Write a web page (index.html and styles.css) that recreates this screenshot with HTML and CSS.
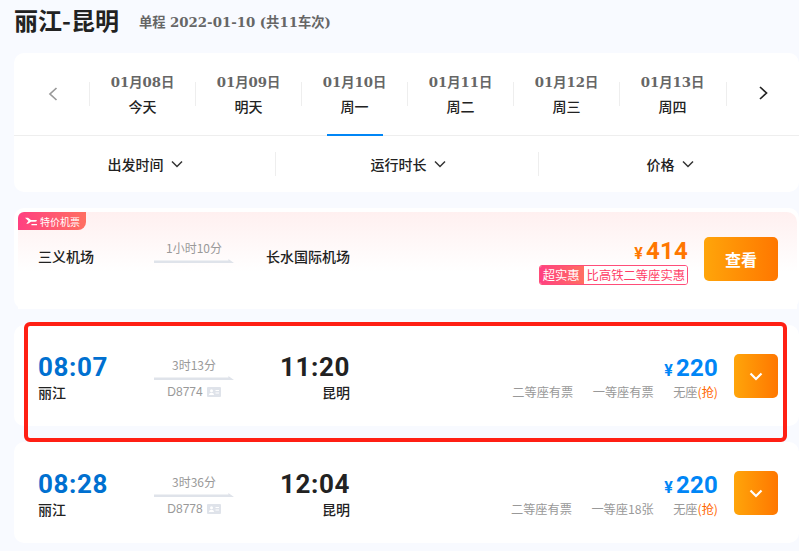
FILE: index.html
```html
<!DOCTYPE html>
<html lang="zh">
<head>
<meta charset="utf-8">
<title>丽江-昆明</title>
<link rel="stylesheet" href="styles.css">
</head>
<body>
<main class="page">
  <header class="head">
    <h1>丽江-昆明</h1>
    <p>单程 2022-01-10 (共11车次)</p>
  </header>

  <section class="panel">
    <nav class="dates">
      <div class="arrow prev"><svg width="10" height="16" viewBox="0 0 10 16"><path d="M8.500 2 2 8l6.500 6" /></svg></div>
      <div class="date"><b>01月08日</b><span>今天</span></div>
      <div class="date"><b>01月09日</b><span>明天</span></div>
      <div class="date active"><b>01月10日</b><span>周一</span></div>
      <div class="date"><b>01月11日</b><span>周二</span></div>
      <div class="date"><b>01月12日</b><span>周三</span></div>
      <div class="date"><b>01月13日</b><span>周四</span></div>
      <div class="arrow next"><svg width="10" height="16" viewBox="0 0 10 16"><path d="M2 2l6.500 6L2 14" /></svg></div>
    </nav>
    <div class="filters">
      <div class="filter">出发时间<svg width="12" height="8" viewBox="0 0 12 8"><path d="M1 1.500 6 6.500l5-5" /></svg></div>
      <div class="filter">运行时长<svg width="12" height="8" viewBox="0 0 12 8"><path d="M1 1.500 6 6.500l5-5" /></svg></div>
      <div class="filter">价格<svg width="12" height="8" viewBox="0 0 12 8"><path d="M1 1.500 6 6.500l5-5" /></svg></div>
    </div>
  </section>

  <section class="card promo">
    <div class="promo-inner">
      <div class="tag"><svg width="12" height="9" viewBox="0 0 14 10"><path d="M0 .5h3.500L7 3.200h5c1.300 0 2 .5 2 1s-.7 1-2 1H7L3.500 7.500H1.500L4 4.300zM7.500 8H14v1.500H7.500z" /></svg>特价机票</div>
      <div class="row promo-row">
        <div class="from name airport">三义机场</div>
        <div class="mid">
          <span class="dur">1小时10分</span>
          <i class="line"></i>
        </div>
        <div class="to name airport">长水国际机场</div>
        <div class="price-box">
          <div class="price orange"><small>¥</small>414</div>
          <div class="deal"><em>超实惠</em><span>比高铁二等座实惠</span></div>
        </div>
        <div class="btn">查看</div>
      </div>
    </div>
  </section>

  <section class="card train">
    <div class="row">
      <div class="from"><div class="time dep">08:07</div><div class="name">丽江</div></div>
      <div class="mid">
        <span class="dur">3时13分</span>
        <i class="line"></i>
        <span class="code">D8774<svg width="14" height="10" viewBox="0 0 14 10"><rect width="14" height="10" rx="1" fill="#dfe3ea"/><circle cx="4.500" cy="3.800" r="1.500" fill="#fff"/><path d="M2 8c0-3 5-3 5 0zM8.500 3h3.500v1H8.500zM8.500 5.500h3.500v1H8.500z" fill="#fff"/></svg></span>
      </div>
      <div class="to"><div class="time">11:20</div><div class="name">昆明</div></div>
      <div class="price-box">
        <div class="price blue"><small>¥</small>220</div>
        <div class="seats"><span>二等座有票</span><span>一等座有票</span><span>无座<u>(抢)</u></span></div>
      </div>
      <div class="btn small"><svg width="14" height="9" viewBox="0 0 14 9"><path d="M1.500 1.500 7 7l5.500-5.500" /></svg></div>
    </div>
  </section>

  <section class="card train">
    <div class="row">
      <div class="from"><div class="time dep">08:28</div><div class="name">丽江</div></div>
      <div class="mid">
        <span class="dur">3时36分</span>
        <i class="line"></i>
        <span class="code">D8778<svg width="14" height="10" viewBox="0 0 14 10"><rect width="14" height="10" rx="1" fill="#dfe3ea"/><circle cx="4.500" cy="3.800" r="1.500" fill="#fff"/><path d="M2 8c0-3 5-3 5 0zM8.500 3h3.500v1H8.500zM8.500 5.500h3.500v1H8.500z" fill="#fff"/></svg></span>
      </div>
      <div class="to"><div class="time">12:04</div><div class="name">昆明</div></div>
      <div class="price-box">
        <div class="price blue"><small>¥</small>220</div>
        <div class="seats"><span>二等座有票</span><span>一等座18张</span><span>无座<u>(抢)</u></span></div>
      </div>
      <div class="btn small"><svg width="14" height="9" viewBox="0 0 14 9"><path d="M1.500 1.500 7 7l5.500-5.500" /></svg></div>
    </div>
  </section>
  <div class="highlight"></div>
</main>
</body>
</html>
```
FILE: styles.css
```css
* { box-sizing: border-box; }
html, body { margin: 0; height: 551px; overflow: hidden; }
body {
  background: #f8faff;
  color: #222;
  font-family: "Noto Sans", "Noto Sans CJK SC", sans-serif;
  font-size: 13px;
}
.page { position: relative; width: 799px; height: 551px; padding-left: 14px; }
.head { display: flex; align-items: flex-start; height: 53px; gap: 20px; }
.head h1 { margin: 0; font-size: 24px; line-height: 40px; font-weight: 700; color: #222; font-family: "Noto Sans CJK SC", sans-serif; }
.head p { margin: 13px 0 0; font-family: "DejaVu Serif", "Noto Sans CJK SC", serif; font-size: 13.300px; line-height: 20px; font-weight: 700; color: #666; }

.panel { background: #fff; border-radius: 10px; height: 139px; }
.dates { display: flex; height: 83px; border-bottom: 1px solid #eee; }
.arrow { width: 75px; display: flex; align-items: center; justify-content: center; padding-bottom: 1px; }
.arrow svg { fill: none; stroke-width: 1.700; }
.prev svg { stroke: #999; margin-left: 2px; }
.next svg { stroke: #222; margin-left: 1px; margin-bottom: 2px; }
.next { flex: 1; }
.date {
  position: relative;
  width: 106px;
  display: flex;
  flex-direction: column;
  align-items: center;
  padding: 20px 0 0 1px;
  gap: 3px;
}
.date::before { content: ""; position: absolute; left: 0; top: 29px; height: 24px; width: 1px; background: #eee; }
.date:nth-child(7)::after { content: ""; position: absolute; right: -2px; top: 29px; height: 24px; width: 1px; background: #eee; }
.date b { color: #666; font-family: "DejaVu Serif", "Noto Sans CJK SC", serif; font-size: 13.300px; line-height: 20px; }
.date span { color: #222; font-family: "Noto Sans CJK SC", sans-serif; font-size: 14px; font-weight: 500; line-height: 20px; }
.active::after { content: ""; position: absolute; left: 26px; bottom: -1px; width: 56px; height: 2px; background: #0086f6; }

.filters { display: flex; height: 55px; align-items: center; }
.filter {
  flex: 0 0 261px;
  height: 24px;
  display: flex;
  align-items: center;
  justify-content: center;
  gap: 7px;
  padding-left: 2px;
  font-family: "Noto Sans CJK SC", sans-serif;
  font-size: 14px;
  font-weight: 500;
  color: #222;
  border-left: 1px solid #eee;
}
.filter:first-child { border-left: 0; padding-left: 1px; }
.filter:nth-child(2) { flex-basis: 263px; }
.filter svg { fill: none; stroke: #333; stroke-width: 1.500; }

.card { background: #fff; border-radius: 10px; height: 101px; margin-top: 16px; }
.promo { padding: 4px 2px 0 4px; }
.promo-inner { height: 97px; border-radius: 10px 10px 0 0; background: linear-gradient(#fff0f0, #fff 62%); }
.tag {
  display: inline-flex;
  align-items: center;
  gap: 3px;
  width: 68px;
  height: 18px;
  padding-left: 7px;
  border-radius: 6px 0 8px 0;
  color: #fff;
  font-family: "Noto Sans CJK SC", sans-serif;
  font-size: 10px;
  background: linear-gradient(90deg, #ff4081, #ff6f61);
  vertical-align: top;
}
.tag svg { fill: #fff; flex: none; }
.row { display: flex; align-items: flex-start; height: 100%; padding: 29px 21px 0 24px; }
.promo-row { height: auto; padding: 0 19px 0 20px; margin-top: 7px; }
.from { width: 116px; }
.mid { width: 80px; display: flex; flex-direction: column; align-items: center; padding-top: 3px; }
.to { width: 116px; text-align: right; }
.name { font-family: "Noto Sans CJK SC", sans-serif; font-size: 14px; font-weight: 500; line-height: 20px; color: #222; }
.time + .name { margin-top: 2px; }
.airport { margin-top: 9px; }
.promo-row .from { width: 116px; }
.promo-row .to { width: 84px; margin-left: 32px; text-align: left; white-space: nowrap; }
.time { font-family: Roboto, sans-serif; font-size: 26px; font-weight: 700; line-height: 26px; letter-spacing: .6px; color: #222; }
.dep { color: #0070d0; }
.dur { font-family: "Noto Sans CJK SC", sans-serif; font-size: 12px; color: #999; line-height: 16px; }
.line {
  display: block;
  width: 80px;
  height: 4px;
  margin-top: 3px;
  background: #dfe3ea;
  clip-path: polygon(0 40%, 93% 40%, 93% 0, 100% 100%, 0 100%);
}
.code { display: flex; align-items: center; gap: 4px; margin-top: 4px; font-size: 12px; color: #999; line-height: 16px; font-family: "Liberation Sans", sans-serif; }
.price-box { flex: 1; display: flex; flex-direction: column; align-items: flex-end; }
.price { font-family: Roboto, sans-serif; font-size: 24px; font-weight: 700; line-height: 28px; height: 28px; letter-spacing: .2px; }
.price small { font-size: 16px; margin-right: 3px; }
.orange { color: #ff7700; }
.blue { color: #0086f6; }
.deal {
  display: flex;
  height: 20px;
  border: 1px solid #ff4d79;
  border-radius: 3px;
  overflow: hidden;
  font-family: "Noto Sans CJK SC", sans-serif;
  font-size: 12.300px;
  line-height: 18px;
  white-space: nowrap;
}
.deal em { font-style: normal; color: #fff; padding: 0 4px 0 3px; background: linear-gradient(90deg, #ff4081, #ff6f61); }
.deal span { color: #ff3d66; background: #fff; padding: 0 2px 0 3px; }
.seats { display: flex; gap: 19.500px; margin-top: 1px; font-family: "Noto Sans CJK SC", sans-serif; font-size: 12.200px; line-height: 18px; color: #999; white-space: nowrap; }
.seats u { text-decoration: none; color: #ff6600; }
.btn {
  flex: none;
  width: 74px;
  height: 44px;
  margin-left: 16px;
  border-radius: 5px;
  display: flex;
  align-items: center;
  justify-content: center;
  background: linear-gradient(90deg, #ffa50a, #ff7700);
  color: #fff;
  font-family: "Noto Sans CJK SC", sans-serif;
  font-size: 16px;
  font-weight: 700;
}
.btn.small { width: 44px; }
.btn svg { fill: none; stroke: #fff; stroke-width: 2.200; }
.highlight {
  position: absolute;
  left: 24px;
  top: 322px;
  width: 763px;
  height: 120px;
  border: 4px solid #ff1f14;
  border-radius: 6px;
  pointer-events: none;
}
```
